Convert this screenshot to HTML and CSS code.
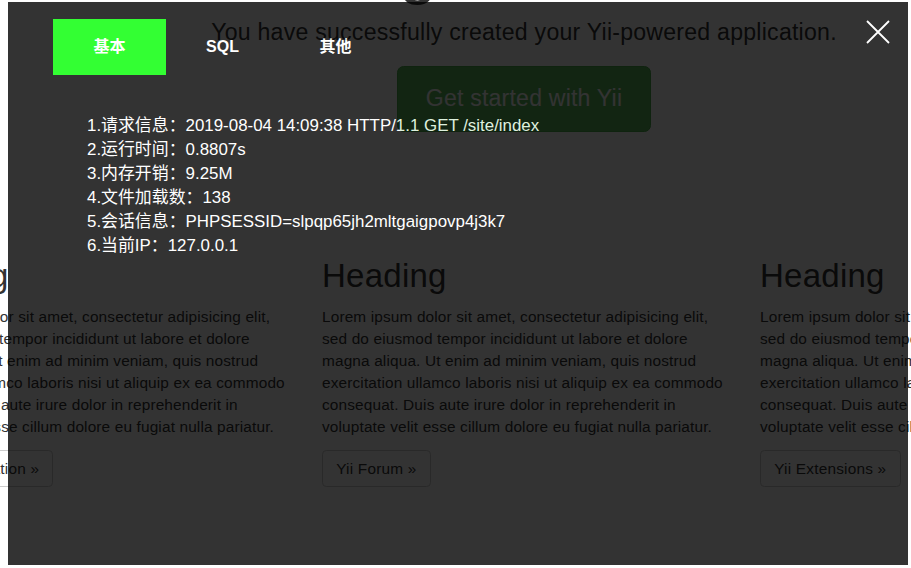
FILE: index.html
```html
<!DOCTYPE html>
<html lang="zh-CN">
<head>
<meta charset="utf-8">
<title>My Yii Application</title>
<link rel="stylesheet" href="styles.css">
</head>
<body>
<div class="page">
  <div class="jumbotron">
    <h1 class="title">Congratulations!</h1>
    <p class="lead">You have successfully created your Yii-powered application.</p>
    <div class="cta"><a class="btn-lg" href="#">Get started with Yii</a></div>
  </div>
  <div class="row">
    <div class="col">
      <h2>Heading</h2>
      <p>Lorem ipsum dolor sit amet, consectetur adipisicing elit,<br>sed do eiusmod tempor incididunt ut labore et dolore<br>magna aliqua. Ut enim ad minim veniam, quis nostrud<br>exercitation ullamco laboris nisi ut aliquip ex ea commodo<br>consequat. Duis aute irure dolor in reprehenderit in<br>voluptate velit esse cillum dolore eu fugiat nulla pariatur.</p>
      <a class="btn" href="#">Yii Documentation &raquo;</a>
    </div>
    <div class="col">
      <h2>Heading</h2>
      <p>Lorem ipsum dolor sit amet, consectetur adipisicing elit,<br>sed do eiusmod tempor incididunt ut labore et dolore<br>magna aliqua. Ut enim ad minim veniam, quis nostrud<br>exercitation ullamco laboris nisi ut aliquip ex ea commodo<br>consequat. Duis aute irure dolor in reprehenderit in<br>voluptate velit esse cillum dolore eu fugiat nulla pariatur.</p>
      <a class="btn" href="#">Yii Forum &raquo;</a>
    </div>
    <div class="col">
      <h2>Heading</h2>
      <p>Lorem ipsum dolor sit amet, consectetur adipisicing elit,<br>sed do eiusmod tempor incididunt ut labore et dolore<br>magna aliqua. Ut enim ad minim veniam, quis nostrud<br>exercitation ullamco laboris nisi ut aliquip ex ea commodo<br>consequat. Duis aute irure dolor in reprehenderit in<br>voluptate velit esse cillum dolore eu fugiat nulla pariatur.</p>
      <a class="btn" href="#">Yii Extensions &raquo;</a>
    </div>
  </div>
</div>

<div class="overlay">
  <div class="tabs">
    <div class="tab active">基本</div>
    <div class="tab">SQL</div>
    <div class="tab">其他</div>
  </div>
  <ul class="info">
    <li>1.请求信息<span class="colon">：</span>2019-08-04 14:09:38 HTTP/1.1 GET /site/index</li>
    <li>2.运行时间<span class="colon">：</span>0.8807s</li>
    <li>3.内存开销<span class="colon">：</span>9.25M</li>
    <li>4.文件加载数<span class="colon">：</span>138</li>
    <li>5.会话信息<span class="colon">：</span>PHPSESSID=slpqp65jh2mltgaigpovp4j3k7</li>
    <li>6.当前IP<span class="colon">：</span>127.0.0.1</li>
  </ul>
  <svg class="close" viewBox="0 0 24 24" width="24" height="24">
    <path d="M1 1 L23 23 M23 1 L1 23" stroke="#fff" stroke-width="1.8" fill="none"/>
  </svg>
</div>
</body>
</html>
```

FILE: styles.css
```css
html, body {
  margin: 0;
  padding: 0;
  overflow: hidden;
  background: #fff;
}

body {
  width: 911px;
  height: 568px;
  font-family: "Liberation Sans", Arial, sans-serif;
  color: #333;
}

.jumbotron {
  width: 1048px;
  text-align: center;
}

.title {
  margin: -71px 0 0;
  font-size: 69.3px;
  line-height: 76px;
  font-weight: normal;
}

.lead {
  margin: 11px 0 0;
  font-size: 23.1px;
  line-height: 33px;
  letter-spacing: 0.24px;
}

.cta {
  display: flex;
  justify-content: center;
  margin-top: 17px;
}

.btn-lg {
  display: block;
  padding: 15.4px 28px;
  font-size: 23.1px;
  line-height: 33px;
  letter-spacing: 0.2px;
  color: #fff;
  background: #5cb85c;
  border: 1px solid #4cae4c;
  border-radius: 6.6px;
  text-decoration: none;
}

.row {
  display: flex;
  margin-left: -116px;
  margin-top: 126.6px;
}

.col {
  width: 438px;
  flex: none;
}

.col h2 {
  margin: 0 0 11.7px;
  font-size: 33px;
  line-height: 36.3px;
  letter-spacing: 0.25px;
  font-weight: normal;
}

.col p {
  margin: 0 0 11.6px;
  font-size: 15.4px;
  line-height: 22px;
  letter-spacing: 0.14px;
  white-space: nowrap;
}

.btn {
  display: inline-block;
  padding: 6.6px 13.2px;
  font-size: 15.4px;
  line-height: 22px;
  letter-spacing: 0.2px;
  color: #333;
  border: 1px solid #ccc;
  border-radius: 4.4px;
  text-decoration: none;
  white-space: nowrap;
}

.overlay {
  position: fixed;
  left: 8px;
  top: 2px;
  width: 900px;
  height: 563px;
  background: #000;
  opacity: 0.8;
  color: #fff;
  font-family: "Liberation Sans", "Noto Sans CJK SC", sans-serif;
}

.tabs {
  display: flex;
  margin: 17px 0 0 45px;
}

.tab {
  width: 113px;
  height: 56px;
  line-height: 56px;
  text-align: center;
  font-size: 16px;
  font-weight: bold;
}

.tab.active {
  background: #0f0;
}

.info {
  list-style: none;
  margin: 39px 0 0 79px;
  padding: 0;
  font-size: 16.9px;
  line-height: 24px;
}

.info li {
  height: 24px;
}

.colon {
  font-family: "Noto Sans CJK TC", "Noto Sans CJK SC", sans-serif;
  line-height: 0;
}

.close {
  position: absolute;
  left: 858px;
  top: 18px;
}
```
